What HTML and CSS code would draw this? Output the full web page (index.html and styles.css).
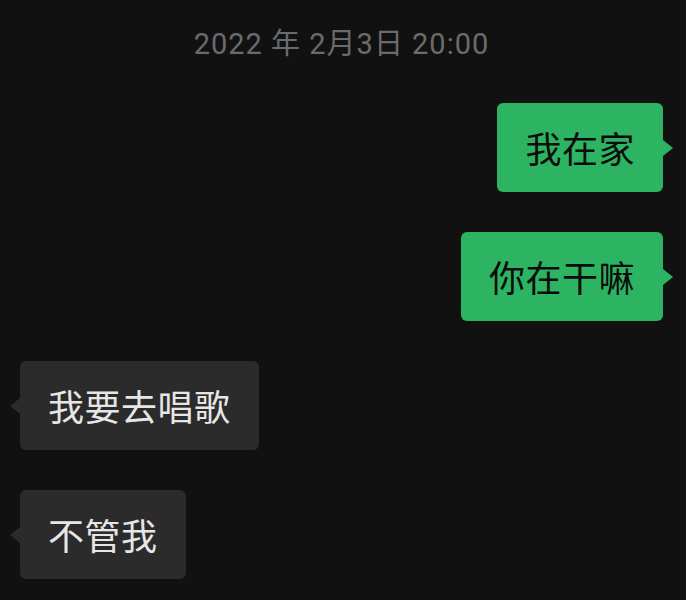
FILE: index.html
```html
<!DOCTYPE html>
<html lang="zh-CN">
<head>
<meta charset="UTF-8">
<meta name="viewport" content="width=device-width, initial-scale=1.0">
<title>聊天</title>
<link rel="stylesheet" href="styles.css">
</head>
<body>
<div class="chat">
    <div class="time">2022 年 2月3日 20:00</div>

    <div class="row mine">
        <div class="bubble green">我在家</div>
    </div>
    <div class="row mine">
        <div class="bubble green">你在干嘛</div>
    </div>

    <div class="row theirs">
        <div class="bubble gray">我要去唱歌</div>
    </div>
    <div class="row theirs">
        <div class="bubble gray">不管我</div>
    </div>
</div>
</body>
</html>
```

FILE: styles.css
```css
/* Dark chat screen */
body {
    margin: 0;
    padding: 0;
    background: #111111;
    font-family: "Noto Sans CJK SC", "Noto Sans", sans-serif;
    height: 600px;
    overflow: hidden;
}

.chat {
    display: flex;
    flex-direction: column;
    gap: 40px;
    padding: 25px 23px 0 20px;
}

.time {
    text-align: center;
    color: #6b6b6b;
    font-family: Roboto, "Noto Sans CJK SC", sans-serif;
    font-size: 29px;
    letter-spacing: 1px;
    line-height: 38px;
}

.row {
    display: flex;
}

.mine {
    justify-content: flex-end;
}

.theirs {
    justify-content: flex-start;
}

.bubble {
    position: relative;
    font-size: 36px;
    line-height: 49px;
    padding: 20px 28px;
    border-radius: 6px;
    letter-spacing: 0.5px;
}

.green {
    background: #2db462;
    color: #0c0c0c;
}

.gray {
    background: #2b2b2b;
    color: #e6e6e6;
}

/* Little tails */
.bubble::after {
    content: "";
    position: absolute;
    top: 50%;
    transform: translateY(-50%);
    border-top: 8px solid transparent;
    border-bottom: 8px solid transparent;
}

.green::after {
    left: 100%;
    border-left: 10px solid #2db462;
}

.gray::after {
    right: 100%;
    border-right: 10px solid #2b2b2b;
}
```
